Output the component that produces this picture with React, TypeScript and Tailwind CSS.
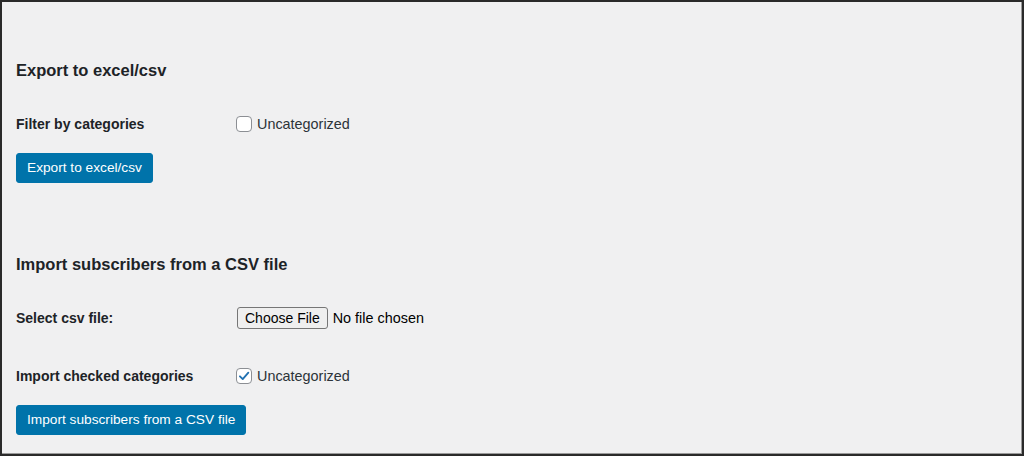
import React from "react";

function CheckBox({ checked }: { checked?: boolean }) {
  return (
    <span className="flex h-4 w-4 items-center justify-center rounded-[4px] border border-[#8c8f94] bg-white">
      {checked && (
        <svg viewBox="0 0 20 20" className="-mt-[1px] h-[20px] w-[20px]">
          <path
            d="M4.2 10.4 8.2 14.4 16.2 5.2"
            fill="none"
            stroke="#2271b1"
            strokeWidth="2.6"
            strokeLinecap="round"
            strokeLinejoin="round"
          />
        </svg>
      )}
    </span>
  );
}

function PrimaryButton({ children }: { children: React.ReactNode }) {
  return (
    <button className="h-[30px] rounded-[3px] border border-[#0073aa] bg-[#0073aa] px-[10px] text-[13.7px] leading-[28px] text-white">
      {children}
    </button>
  );
}

function FieldRow({
  label,
  children,
  className,
}: {
  label: string;
  children: React.ReactNode;
  className?: string;
}) {
  return (
    <div className={"flex items-center " + (className ?? "")}>
      <div className="w-[220px] text-[14px] font-semibold leading-5 text-[#1d2327]">
        {label}
      </div>
      <div className="flex items-center gap-[5px] text-[14.4px] leading-5 text-[#2c3338]">
        {children}
      </div>
    </div>
  );
}

export default function App() {
  return (
    <div
      className="box-border flex h-[456px] w-[1024px] flex-col items-start border-2 border-[#2a2a2a] bg-[#f0f0f1] px-[14px] pt-[56px] shadow-[inset_-1px_-1px_0_#9a9a9a]"
      style={{ fontFamily: '"Liberation Sans", Arial, sans-serif' }}
    >
      <h2 className="text-[16.5px] font-semibold leading-6 text-[#1d2327]">
        Export to excel/csv
      </h2>
      <FieldRow label="Filter by categories" className="mt-[32px]">
        <CheckBox />
        <span>Uncategorized</span>
      </FieldRow>
      <div className="mt-[19px]">
        <PrimaryButton>Export to excel/csv</PrimaryButton>
      </div>

      <h2 className="mt-[69px] text-[16.5px] font-semibold leading-6 text-[#1d2327]">
        Import subscribers from a CSV file
      </h2>
      <FieldRow label="Select csv file:" className="mt-[31px]">
        <span className="ml-[1px] flex h-[22px] items-center rounded-[3px] border border-[#767676] bg-[#efefef] px-[7px] text-[14px] text-black">
          Choose File
        </span>
        <span className="text-black">No file chosen</span>
      </FieldRow>
      <FieldRow label="Import checked categories" className="mt-[37px]">
        <CheckBox checked />
        <span>Uncategorized</span>
      </FieldRow>
      <div className="mt-[19px]">
        <PrimaryButton>Import subscribers from a CSV file</PrimaryButton>
      </div>
    </div>
  );
}
